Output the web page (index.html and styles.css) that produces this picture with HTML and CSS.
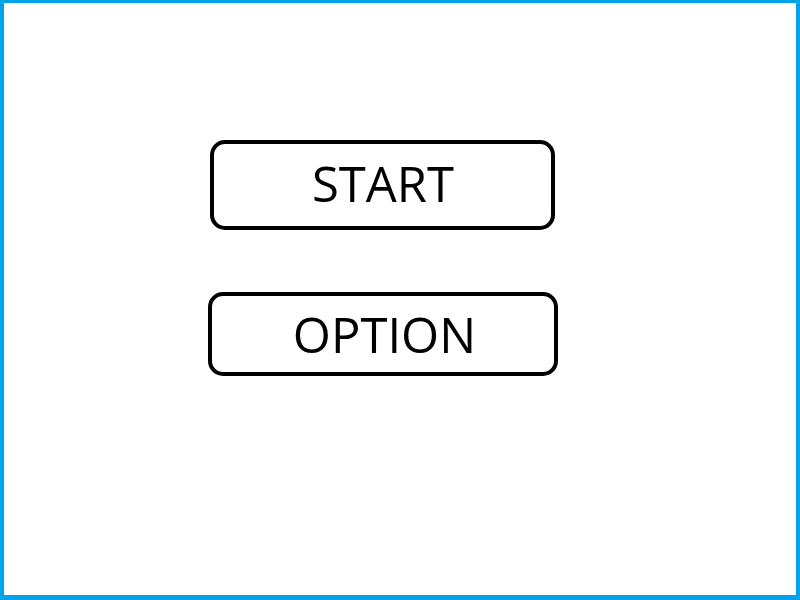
FILE: index.html
```html
<!DOCTYPE html>
<html>
<head>
<meta charset="utf-8">
<link rel="stylesheet" href="styles.css">
</head>
<body>
<div class="frame">
  <div class="menu">
    <div class="btn btn-start"><span class="label">START</span></div>
    <div class="btn btn-option"><span class="label">OPTION</span></div>
  </div>
</div>
</body>
</html>
```
FILE: styles.css
```css
html, body {
  margin: 0;
  padding: 0;
  background: #ffffff;
}
.frame {
  box-sizing: border-box;
  width: 800px;
  height: 600px;
  border-style: solid;
  border-color: #00a2e8;
  border-width: 3px 4px 5px 4px;
  background: #ffffff;
}
.menu {
  display: flex;
  flex-direction: column;
  align-items: flex-start;
  padding-top: 137px;
}
.btn {
  box-sizing: border-box;
  border: 4px solid #000000;
  border-radius: 15px;
  display: flex;
  align-items: center;
  justify-content: center;
  font-family: "Open Sans", "Noto Sans", sans-serif;
  font-size: 49px;
  line-height: 1;
  color: #000000;
}
.btn-start {
  width: 345px;
  height: 90px;
  margin-left: 206px;
  padding: 0 0 4px 1px;
}
.btn-option {
  width: 350px;
  height: 84px;
  margin-left: 204px;
  margin-top: 62px;
  padding: 0 0 0 3px;
}
.label {
  white-space: nowrap;
}
```
